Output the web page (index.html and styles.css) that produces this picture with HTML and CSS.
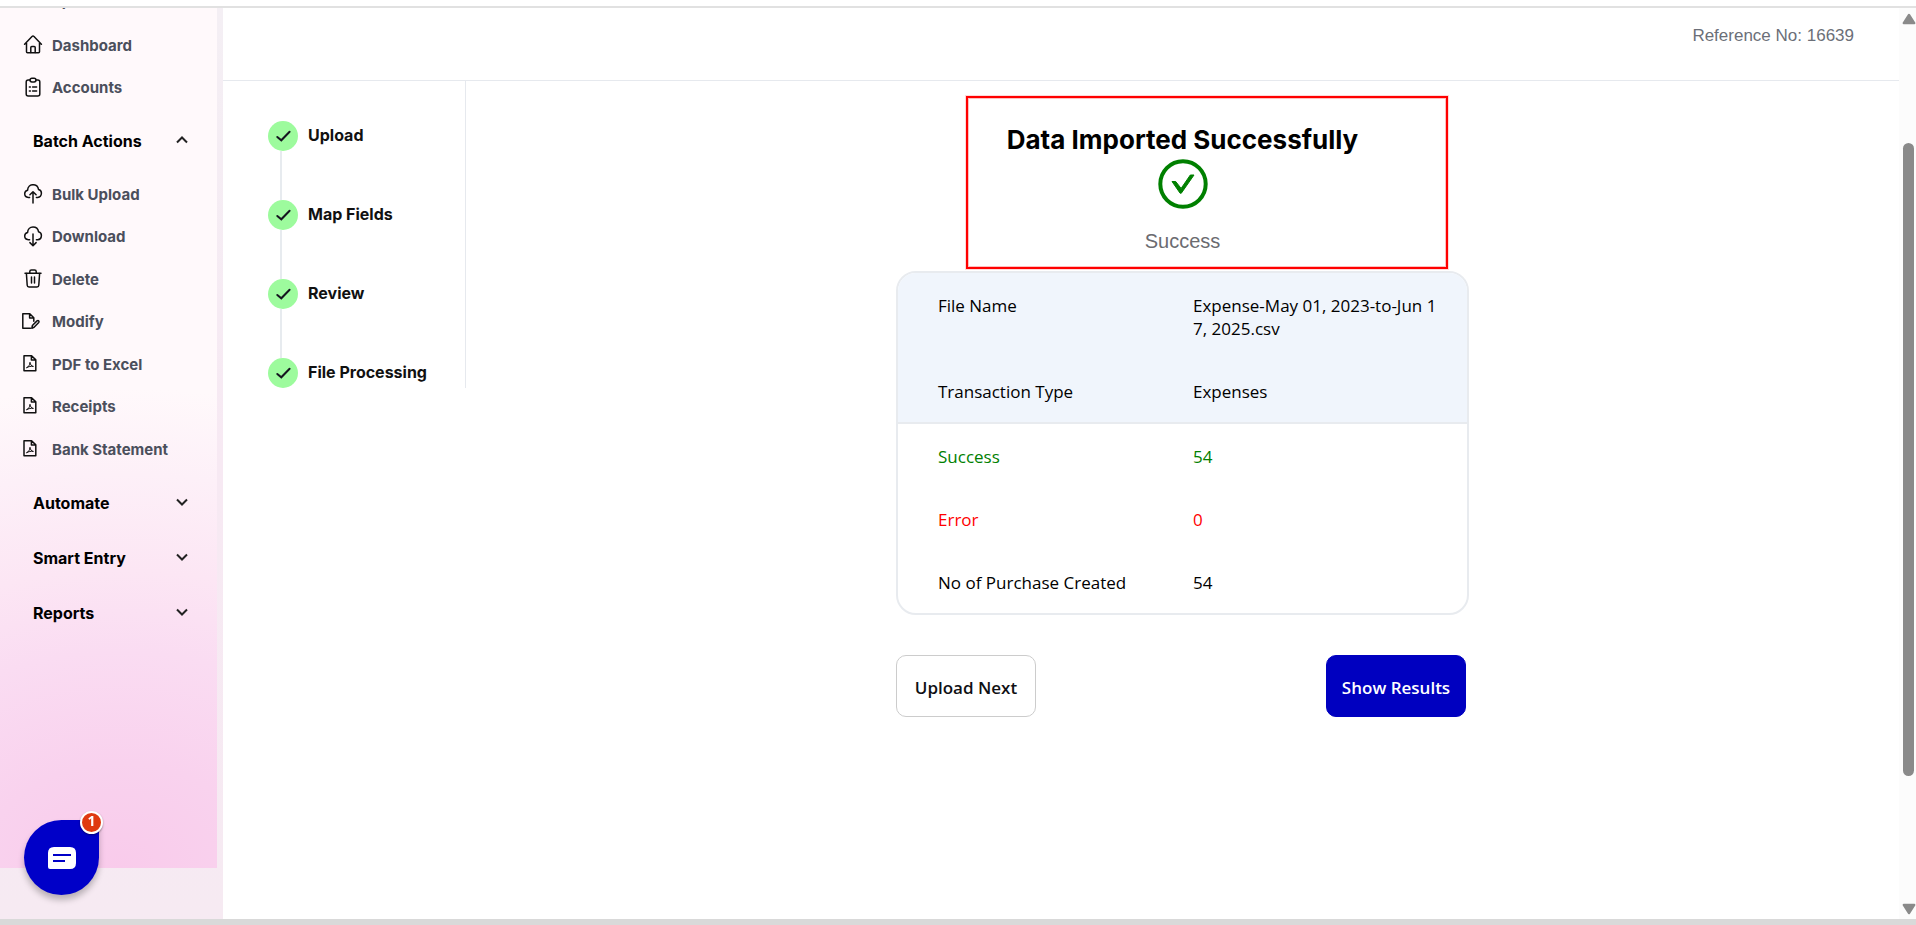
FILE: index.html
```html
<!DOCTYPE html>
<html lang="en">

<head>
    <meta charset="UTF-8">
    <meta name="viewport" content="width=device-width, initial-scale=1.0">
    <title>Data Imported Successfully</title>
    <link rel="stylesheet" href="styles.css">
</head>

<body>

    <!-- Icons used more than once -->
    <svg class="sprite" aria-hidden="true">
        <symbol id="pdf" viewBox="0 0 22 22">
            <path d="M2 1.7h7.6l4.2 4.2v10.8H2zM9.4 1.9v4.2h4.2" />
            <path class="thin" d="M4.8 13.6c1.6-.5 2.9-2.4 3.2-5.3.3 2.3 1.5 4 3.4 4.1-2.4-.3-4.7.1-6.6 1.2z" />
        </symbol>
        <symbol id="chevron" viewBox="0 0 12 8">
            <path d="M1 1.5l5 5 5-5" />
        </symbol>
        <symbol id="tick" viewBox="0 0 30 30">
            <path d="M9.3 16l4 3.3 8.3-8.5" />
        </symbol>
    </svg>

    <div class="layout">
        <aside class="sidebar">
            <nav class="sidebar-inner">
                <ul class="nav-list nav-list-top">
                    <li><a href="#"><svg class="icon" viewBox="0 0 22 22"><circle cx="8" cy="11" r="6" /></svg>Spend</a></li>
                    <li><a href="#">
                        <svg class="icon" viewBox="0 0 22 22">
                            <path d="M2.6 9.3L10 1.5q1-1 2 0l7.4 7.8M4.5 8v8.8q0 1 1 1h11q1 0 1-1V8" />
                            <path d="M8.8 17.6v-5q0-1 1-1h2.4q1 0 1 1v5" />
                        </svg>Dashboard</a></li>
                    <li><a href="#">
                        <svg class="icon" viewBox="0 0 22 22">
                            <path d="M8 3H6.2q-2 0-2 2v12q0 2 2 2h9.6q2 0 2-2V5q0-2-2-2H14" />
                            <rect x="8" y="1.2" width="6" height="3.8" rx="1.9" />
                            <path d="M7.4 10h1M10.6 10h4M7.4 14h1M10.6 14h4" />
                        </svg>Accounts</a></li>
                </ul>

                <button class="nav-head" type="button">Batch Actions
                    <svg class="chevron chevron-up"><use href="#chevron" /></svg>
                </button>

                <ul class="nav-list">
                    <li><a href="#">
                        <svg class="icon" viewBox="0 0 22 22">
                            <path d="M7.6 13.4H6.3c-2-.1-3.6-1.6-3.6-3.6 0-1.8 1.2-3.2 2.9-3.6C5.7 2.9 8 .7 11 .7s5.1 2 5.5 4.7c1.9.5 3 1.9 2.9 3.9-.1 2.3-1.6 4-3.7 4.1h-1.3" />
                            <path d="M11 19V8M7.9 10.8L11 7.7l3.1 3.1" />
                        </svg>Bulk Upload</a></li>
                    <li><a href="#">
                        <svg class="icon" viewBox="0 0 22 22">
                            <path d="M7.6 13.7H6.3c-2-.1-3.6-1.6-3.6-3.6 0-1.8 1.2-3.2 2.9-3.6C5.7 3.2 8 1 11 1s5.1 2 5.5 4.7c1.9.5 3 1.9 2.9 3.9-.1 2.3-1.6 4-3.7 4.1h-1.3" />
                            <path d="M11 8v11.5M7.9 16.6l3.1 3.1 3.1-3.1" />
                        </svg>Download</a></li>
                    <li><a href="#">
                        <svg class="icon" viewBox="0 0 22 22">
                            <path d="M3 4.3h16M7.8 4.2V2.6Q7.8 1 9.4 1h3.2q1.6 0 1.6 1.6v1.6" />
                            <path d="M4.4 4.5l.8 11.8Q5.3 18 7 18h8q1.7 0 1.8-1.7l.8-11.8M9.5 8v6M12.5 8v6" />
                        </svg>Delete</a></li>
                    <li><a href="#">
                        <svg class="icon" viewBox="0 0 22 22">
                            <path d="M8.5 17.2H.8V2.8h7l4 4v3.4M7.6 3v4h4" />
                            <path d="M9.8 17.3l.6-2.8L15 9.9q1-.7 1.7 0 .7.9 0 1.7l-4.6 4.7z" />
                        </svg>Modify</a></li>
                    <li><a href="#"><svg class="icon"><use href="#pdf" /></svg>PDF to Excel</a></li>
                    <li><a href="#"><svg class="icon"><use href="#pdf" /></svg>Receipts</a></li>
                    <li><a href="#"><svg class="icon"><use href="#pdf" /></svg>Bank Statement</a></li>
                </ul>

                <button class="nav-head" type="button">Automate
                    <svg class="chevron"><use href="#chevron" /></svg>
                </button>
                <button class="nav-head" type="button">Smart Entry
                    <svg class="chevron"><use href="#chevron" /></svg>
                </button>
                <button class="nav-head" type="button">Reports
                    <svg class="chevron"><use href="#chevron" /></svg>
                </button>
            </nav>
        </aside>

        <main class="content">
            <header class="topbar">Reference No: 16639</header>

            <div class="workspace">
                <ol class="steps">
                    <li><span class="mark"><svg><use href="#tick" /></svg></span>Upload</li>
                    <li><span class="mark"><svg><use href="#tick" /></svg></span>Map Fields</li>
                    <li><span class="mark"><svg><use href="#tick" /></svg></span>Review</li>
                    <li><span class="mark"><svg><use href="#tick" /></svg></span>File Processing</li>
                </ol>

                <section class="result">
                    <div class="result-head">
                        <h1>Data Imported Successfully</h1>
                        <svg class="success-icon" viewBox="0 0 50 50">
                            <circle cx="25" cy="25" r="22.7" />
                            <path d="M14 22.5h3.7l5.4 6.9L32.3 16H36L23.3 34.2h-1.2z" />
                        </svg>
                        <p>Success</p>
                        <div class="highlight"></div>
                    </div>

                    <div class="card">
                        <table>
                            <tbody class="file-info">
                                <tr>
                                    <th scope="row">File Name</th>
                                    <td>Expense-May 01, 2023-to-Jun 17, 2025.csv</td>
                                </tr>
                                <tr>
                                    <th scope="row">Transaction Type</th>
                                    <td>Expenses</td>
                                </tr>
                            </tbody>
                            <tbody>
                                <tr class="is-success">
                                    <th scope="row">Success</th>
                                    <td>54</td>
                                </tr>
                                <tr class="is-error">
                                    <th scope="row">Error</th>
                                    <td>0</td>
                                </tr>
                                <tr>
                                    <th scope="row">No of Purchase Created</th>
                                    <td>54</td>
                                </tr>
                            </tbody>
                        </table>
                    </div>

                    <div class="actions">
                        <button class="btn" type="button">Upload Next</button>
                        <button class="btn btn-primary" type="button">Show Results</button>
                    </div>
                </section>
            </div>
        </main>

        <div class="scrollbar" aria-hidden="true">
            <svg class="arrow" viewBox="0 0 12 10"><path d="M6 1.5l4.5 7h-9z" /></svg>
            <div class="track">
                <div class="thumb"></div>
            </div>
            <svg class="arrow arrow-down" viewBox="0 0 12 10"><path d="M6 1.5l4.5 7h-9z" /></svg>
        </div>
    </div>

    <button class="chat" type="button" aria-label="Open chat">
        <svg viewBox="0 0 28 22">
            <path class="bubble" d="M6 0h16q6 0 6 6v10q0 6-6 6H2q-2 0-2-2V6q0-6 6-6z" />
            <path class="lines" d="M5 8h18M5 14h12" />
        </svg>
        <span class="badge">1</span>
    </button>

</body>

</html>
```
FILE: styles.css
```css
* {
    box-sizing: border-box;
}

body {
    display: flex;
    flex-direction: column;
    height: 100vh;
    margin: 0;
    padding-top: 6px;
    border-bottom: 6px solid #d9d9d9;
    background: #fff;
    color: #000;
    font-family: Inter, "Liberation Sans", sans-serif;
    overflow: hidden;
}

ul,
ol {
    margin: 0;
    padding: 0;
    list-style: none;
}

button {
    font-family: inherit;
    cursor: pointer;
}

.sprite {
    position: absolute;
    width: 0;
    height: 0;
}

.layout {
    display: flex;
    flex: 1;
    min-height: 0;
    border-top: 2px solid #e1e1e1;
}

/* --- Sidebar --- */
.sidebar {
    display: flex;
    width: 223px;
    flex-shrink: 0;
    padding: 0 6px 51px 0;
    background: linear-gradient(#f4eff4, #f7e9f3 50%, #f6eaf2);
    overflow: hidden;
}

.sidebar-inner {
    flex: 1;
    background: radial-gradient(ellipse 620px 480px at 55% 100%, #f9cbeb, #f9d2ee 22%, #fadcf2 45%, #fce6f4 62%, #fdf0f8 82%, #fff9fb);
}

.nav-list {
    margin: 5px 0 4px;
}

.nav-list-top {
    margin-top: -28px;
}

.nav-list-top li:first-child {
    margin-bottom: 2px;
}

.nav-list a {
    display: flex;
    align-items: center;
    gap: 8px;
    padding: 10px 0 10px 22px;
    color: #4b4f5c;
    font-size: 15px;
    font-weight: 700;
    line-height: 1.5;
    text-decoration: none;
}

.icon {
    width: 22px;
    height: 22px;
    fill: none;
    stroke: #111;
    stroke-width: 1.5;
    stroke-linecap: round;
    stroke-linejoin: round;
}

.thin {
    stroke-width: 1;
}

.nav-head {
    display: flex;
    align-items: center;
    justify-content: space-between;
    width: 100%;
    height: 55px;
    padding: 0 29px 0 33px;
    border: 0;
    background: none;
    color: #000;
    font-size: 16px;
    font-weight: 700;
}

.chevron {
    width: 12px;
    height: 8px;
    margin-bottom: 2px;
    fill: none;
    stroke: #222;
    stroke-width: 2;
}

.chevron-up {
    transform: rotate(180deg);
}

/* --- Content --- */
.content {
    flex: 1;
    min-width: 0;
}

.topbar {
    padding: 16px 45px 32px;
    border-bottom: 1px solid #e6e9ee;
    color: #6b6f78;
    font-family: "Liberation Sans", sans-serif;
    font-size: 17px;
    line-height: 24px;
    text-align: right;
}

.workspace {
    display: flex;
    align-items: flex-start;
}

.steps {
    width: 243px;
    padding: 40px 0 0 45px;
    border-right: 1px solid #e6e9ee;
}

.steps li {
    display: flex;
    gap: 10px;
    color: #111;
    font-size: 16px;
    font-weight: 700;
    line-height: 28px;
}

.mark svg {
    display: block;
    width: 30px;
    height: 30px;
    border-radius: 50%;
    background: #9dfb9d;
    fill: none;
    stroke: #15151f;
    stroke-width: 2;
    stroke-linecap: round;
}

/* Line joining a step to the next one */
.steps li:not(:last-child) .mark::after {
    content: '';
    display: block;
    width: 2px;
    height: 49px;
    margin-left: 12px;
    background: #e7ebef;
}

/* --- Import result --- */
.result {
    width: 573px;
    margin: 0 auto;
    font-family: "Open Sans", "Noto Sans", sans-serif;
}

.result-head {
    position: relative;
    display: flex;
    flex-direction: column;
    align-items: center;
    padding: 41px 0 18px;
}

.result-head h1 {
    margin: 0 0 1px;
    font-family: Inter, "Liberation Sans", sans-serif;
    font-size: 26px;
    font-weight: 700;
    line-height: 36px;
}

.result-head p {
    margin: 20px 0 0;
    color: #6b6b70;
    font-family: "Liberation Sans", sans-serif;
    font-size: 20px;
    line-height: 24px;
}

.success-icon {
    width: 50px;
    height: 50px;
    fill: #008000;
    stroke: #008000;
}

.success-icon circle {
    fill: none;
    stroke-width: 4;
}

.highlight {
    position: absolute;
    top: 15px;
    right: 21px;
    bottom: 2px;
    left: 70px;
    border: 2px solid #f00;
    box-shadow: 0 0 0 1px rgba(255, 0, 0, 0.15), inset 0 0 0 1px rgba(255, 0, 0, 0.25);
}

.card {
    border: 2px solid #e8ebef;
    border-radius: 20px;
    overflow: hidden;
}

.card table {
    width: 100%;
    border-spacing: 0;
    font-size: 17px;
    line-height: 23px;
}

.card th,
.card td {
    padding: 21px 24px 19px 0;
    font-weight: 400;
    text-align: left;
    vertical-align: top;
    word-break: break-all;
}

.card th {
    width: 295px;
    padding-left: 40px;
}

.file-info {
    background: #f0f5fc;
}

.file-info tr:last-child > * {
    border-bottom: 2px solid #e8ebef;
}

.is-success {
    color: #008000;
}

.is-error {
    color: #f00;
}

.actions {
    display: flex;
    justify-content: space-between;
    margin: 40px 3px 0 0;
}

.btn {
    width: 140px;
    height: 62px;
    padding: 2px 0 0;
    border: 1px solid #ccc;
    border-radius: 10px;
    background: #fff;
    color: #101014;
    font-size: 17px;
    font-weight: 600;
}

.btn-primary {
    border-color: #0000c0;
    background: #0000c0;
    color: #fff;
}

/* --- Scrollbar --- */
.scrollbar {
    display: flex;
    flex-direction: column;
    align-items: center;
    width: 17px;
    padding: 5px 0 4px 2px;
    background: #fcfcfc;
}

.arrow {
    width: 14px;
    height: 12px;
    fill: #8a8a8a;
    stroke: #8a8a8a;
    stroke-width: 2;
    stroke-linejoin: round;
}

.arrow-down {
    transform: rotate(180deg);
}

.track {
    display: flex;
    flex: 1;
    flex-direction: column;
}

.track::before {
    content: '';
    flex: 13;
}

.track::after {
    content: '';
    flex: 14;
}

.thumb {
    flex: 70;
    width: 11px;
    border-radius: 6px;
    background: #8a8a8a;
}

/* --- Chat launcher --- */
.chat {
    position: fixed;
    bottom: 30px;
    left: 24px;
    display: flex;
    align-items: center;
    justify-content: center;
    width: 75px;
    height: 75px;
    padding: 0;
    border: 0;
    border-radius: 50% 0 50% 50%;
    background: #0000c8;
    box-shadow: 0 5px 6px rgba(0, 0, 0, 0.25);
}

.chat svg {
    width: 28px;
    height: 22px;
}

.bubble {
    fill: #fff;
}

.lines {
    stroke: #0000c8;
    stroke-width: 2;
}

.badge {
    position: absolute;
    top: -9px;
    right: -4px;
    width: 23px;
    height: 23px;
    border: 2px solid #fff;
    border-radius: 50%;
    background: #df3a10;
    box-shadow: 0 1px 2px rgba(0, 0, 0, 0.4);
    color: #fff;
    font-family: "Open Sans", sans-serif;
    font-size: 14px;
    font-weight: 700;
    line-height: 16px;
}
```
